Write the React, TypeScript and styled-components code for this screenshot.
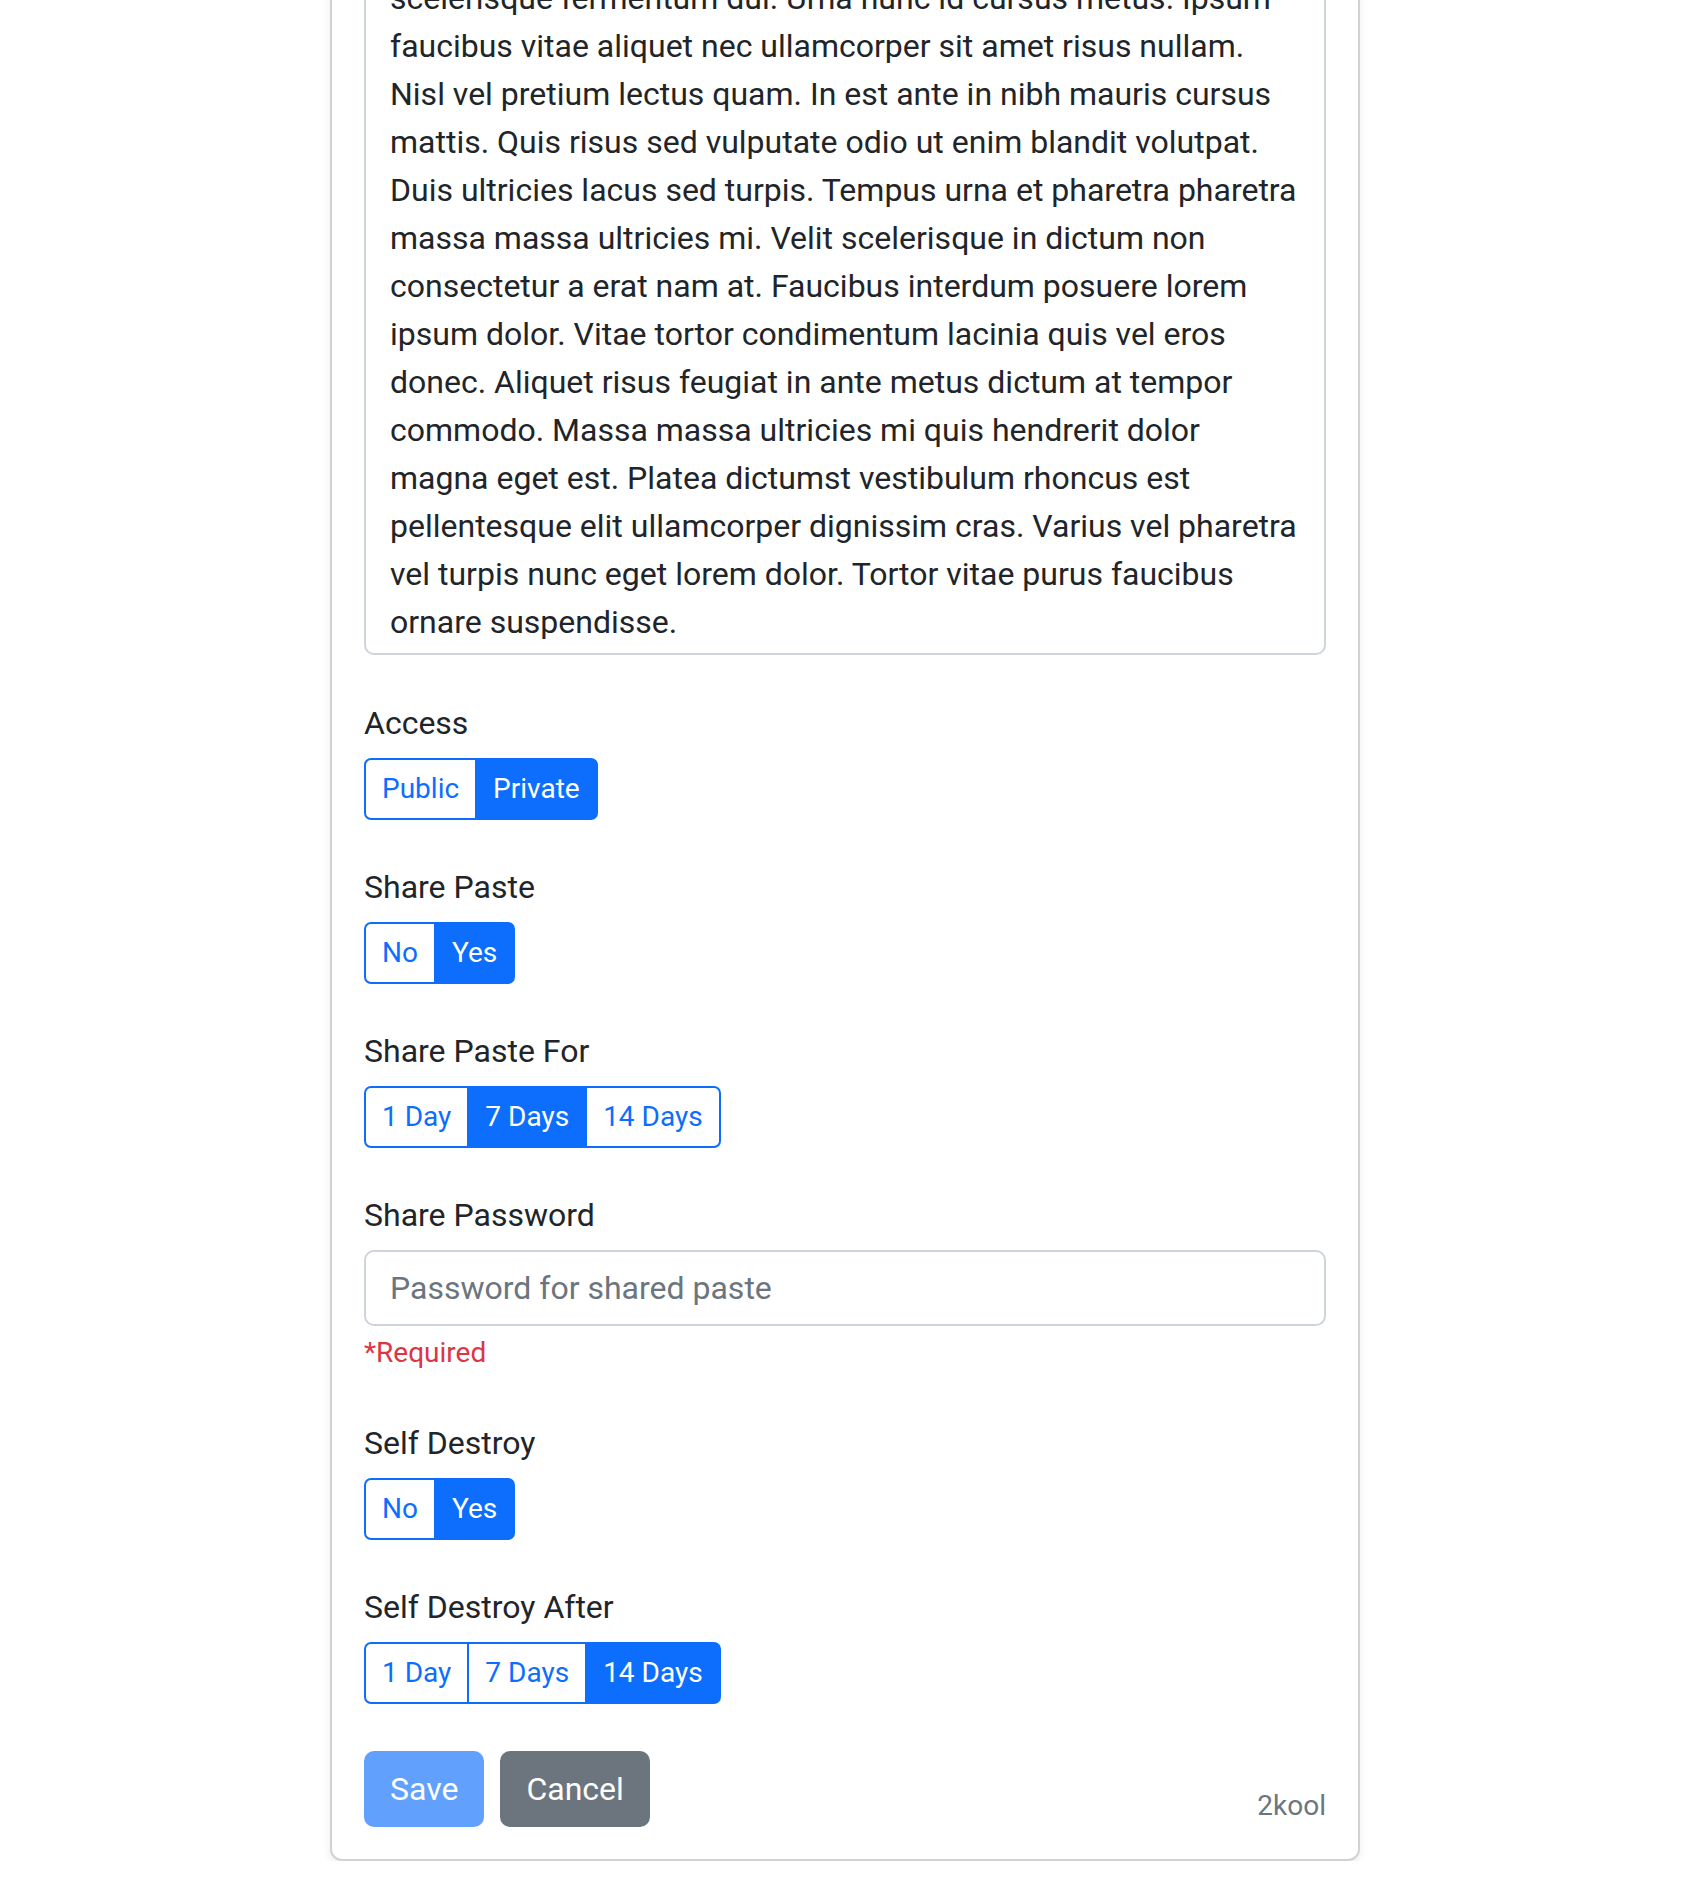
import React from "react";
import styled, { createGlobalStyle, css } from "styled-components";

const GlobalStyle = createGlobalStyle`
  html, body {
    margin: 0;
    padding: 0;
    background: #ffffff;
  }
  body {
    font-family: Roboto, "Liberation Sans", Arial, sans-serif;
    color: #212529;
    -webkit-font-smoothing: antialiased;
  }
  *, *::before, *::after {
    box-sizing: border-box;
  }
`;

const Page = styled.div`
  /* the view is scrolled: the top of the form sits above the viewport */
  margin-top: -79px;
`;

const Card = styled.div`
  width: 1030px;
  margin: 0 auto;
  background: #ffffff;
  border: 2px solid rgba(0, 0, 0, 0.175);
  border-radius: 12px;
  box-shadow: 0 4px 8px rgba(0, 0, 0, 0.075);
`;

const CardBody = styled.form`
  padding: 32px;
  display: flex;
  flex-direction: column;
`;

const Field = styled.div<{ $spacing?: number }>`
  margin-bottom: ${(p) => p.$spacing ?? 38}px;
`;

const Label = styled.label`
  display: block;
  font-size: 32px;
  line-height: 48px;
  padding-top: 5px;
  margin-bottom: 11px;
  color: #212529;
`;

const ContentArea = styled.textarea`
  display: block;
  width: 100%;
  height: 700px;
  margin: 0;
  padding: 17px 24px 7px;
  font-family: Roboto, "Liberation Sans", Arial, sans-serif;
  font-size: 32px;
  line-height: 48px;
  color: #212529;
  background: #ffffff;
  border: 2px solid #ced4da;
  border-radius: 10px;
  resize: none;
  overflow: hidden;
  white-space: pre;
  outline: none;
`;

const ButtonGroup = styled.div`
  display: inline-flex;
  vertical-align: middle;
`;

const ToggleButton = styled.button<{ $active?: boolean }>`
  position: relative;
  margin: 0;
  padding: 8px 16px;
  font-family: Roboto, "Liberation Sans", Arial, sans-serif;
  font-size: 28px;
  line-height: 42px;
  border: 2px solid #0d6efd;
  border-radius: 0;
  cursor: pointer;
  background: #ffffff;
  color: #0d6efd;

  & + & {
    margin-left: -2px;
  }
  &:first-child {
    border-top-left-radius: 7px;
    border-bottom-left-radius: 7px;
  }
  &:last-child {
    border-top-right-radius: 7px;
    border-bottom-right-radius: 7px;
  }

  ${(p) =>
    p.$active &&
    css`
      background: #0d6efd;
      color: #ffffff;
      z-index: 1;
    `}
`;

const TextInput = styled.input`
  display: block;
  width: 100%;
  height: 76px;
  margin: 0;
  padding: 12px 24px;
  font-family: Roboto, "Liberation Sans", Arial, sans-serif;
  font-size: 32px;
  line-height: 48px;
  color: #212529;
  background: #ffffff;
  border: 2px solid #ced4da;
  border-radius: 10px;
  outline: none;

  &::placeholder {
    color: #6c757d;
    opacity: 1;
  }
`;

const HelpText = styled.div`
  margin-top: 6px;
  font-size: 28px;
  line-height: 42px;
  color: #dc3545;
`;

const ActionRow = styled.div`
  display: flex;
  align-items: flex-end;
  justify-content: space-between;
  margin-top: 9px;
`;

const ActionButtons = styled.div`
  display: flex;
  gap: 16px;
`;

const ActionButton = styled.button<{ $variant: "primary" | "secondary" }>`
  margin: 0;
  padding: 12px 24px;
  font-family: Roboto, "Liberation Sans", Arial, sans-serif;
  font-size: 32px;
  line-height: 48px;
  color: #ffffff;
  border-radius: 10px;
  cursor: pointer;
  ${(p) =>
    p.$variant === "primary"
      ? css`
          background: #0d6efd;
          border: 2px solid #0d6efd;
          opacity: 0.65;
          cursor: default;
        `
      : css`
          background: #6c757d;
          border: 2px solid #6c757d;
        `}
`;

const Owner = styled.span`
  font-size: 28px;
  line-height: 42px;
  color: #6c757d;
`;

const contentLines = [
  "scelerisque fermentum dui. Urna nunc id cursus metus. Ipsum",
  "faucibus vitae aliquet nec ullamcorper sit amet risus nullam.",
  "Nisl vel pretium lectus quam. In est ante in nibh mauris cursus",
  "mattis. Quis risus sed vulputate odio ut enim blandit volutpat.",
  "Duis ultricies lacus sed turpis. Tempus urna et pharetra pharetra",
  "massa massa ultricies mi. Velit scelerisque in dictum non",
  "consectetur a erat nam at. Faucibus interdum posuere lorem",
  "ipsum dolor. Vitae tortor condimentum lacinia quis vel eros",
  "donec. Aliquet risus feugiat in ante metus dictum at tempor",
  "commodo. Massa massa ultricies mi quis hendrerit dolor",
  "magna eget est. Platea dictumst vestibulum rhoncus est",
  "pellentesque elit ullamcorper dignissim cras. Varius vel pharetra",
  "vel turpis nunc eget lorem dolor. Tortor vitae purus faucibus",
  "ornare suspendisse.",
];

type ToggleProps = {
  label: string;
  options: string[];
  selected: number;
};

function ToggleField({ label, options, selected }: ToggleProps) {
  return (
    <Field>
      <Label>{label}</Label>
      <ButtonGroup role="group" aria-label={label}>
        {options.map((o, i) => (
          <ToggleButton type="button" key={o} $active={i === selected}>
            {o}
          </ToggleButton>
        ))}
      </ButtonGroup>
    </Field>
  );
}

export default function App() {
  return (
    <>
      <GlobalStyle />
      <Page>
        <Card>
          <CardBody onSubmit={(e) => e.preventDefault()}>
            <Field $spacing={39}>
              <ContentArea
                readOnly
                wrap="off"
                value={contentLines.join("\n")}
              />
            </Field>

            <ToggleField label="Access" options={["Public", "Private"]} selected={1} />
            <ToggleField label="Share Paste" options={["No", "Yes"]} selected={1} />
            <ToggleField
              label="Share Paste For"
              options={["1 Day", "7 Days", "14 Days"]}
              selected={1}
            />

            <Field $spacing={40}>
              <Label htmlFor="share-password">Share Password</Label>
              <TextInput
                id="share-password"
                type="password"
                placeholder="Password for shared paste"
              />
              <HelpText>*Required</HelpText>
            </Field>

            <ToggleField label="Self Destroy" options={["No", "Yes"]} selected={1} />
            <ToggleField
              label="Self Destroy After"
              options={["1 Day", "7 Days", "14 Days"]}
              selected={2}
            />

            <ActionRow>
              <ActionButtons>
                <ActionButton type="submit" $variant="primary" disabled>
                  Save
                </ActionButton>
                <ActionButton type="button" $variant="secondary">
                  Cancel
                </ActionButton>
              </ActionButtons>
              <Owner>2kool</Owner>
            </ActionRow>
          </CardBody>
        </Card>
      </Page>
    </>
  );
}
